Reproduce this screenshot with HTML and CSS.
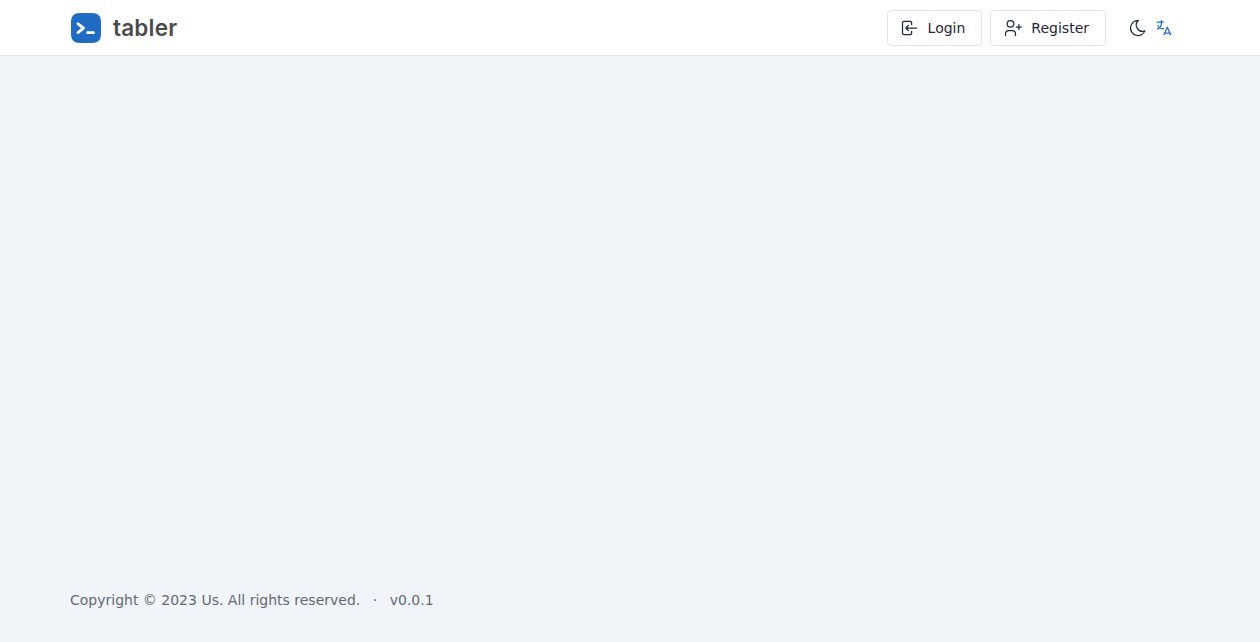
FILE: index.html
```html
<!DOCTYPE html>
<html lang="en">
<head>
<meta charset="utf-8">
<title>Tabler</title>
<link rel="stylesheet" href="styles.css">
</head>
<body>
<div class="page">
  <header class="navbar">
    <div class="container nav-inner">
      <a class="brand" href="#">
        <svg class="brand-mark" viewBox="0 0 30 30" width="30" height="30" aria-hidden="true">
          <path class="brand-bg" d="M9 0H21C27 0 30 3 30 9V21C30 27 27 30 21 30H9C3 30 0 27 0 21V9C0 3 3 0 9 0Z"/>
          <path class="brand-fg" d="M7 10.8L12.5 15.2L7 19.6M16.5 19.7H22.5"/>
        </svg>
        <span class="brand-name">tabler</span>
      </a>
      <div class="nav-actions">
        <a class="btn" href="#">
          <svg class="icon btn-icon" viewBox="0 0 24 24"><path d="M14 8v-2a2 2 0 0 0 -2 -2h-7a2 2 0 0 0 -2 2v12a2 2 0 0 0 2 2h7a2 2 0 0 0 2 -2v-2"/><path d="M20 12h-13l3 -3m0 6l-3 -3"/></svg>
          Login
        </a>
        <a class="btn" href="#">
          <svg class="icon btn-icon" viewBox="0 0 24 24"><path d="M5 7a4 4 0 1 0 8 0a4 4 0 1 0 -8 0"/><path d="M3 21v-2a4 4 0 0 1 4 -4h4a4 4 0 0 1 4 4v2"/><path d="M16 11h6m-3 -3v6"/></svg>
          Register
        </a>
        <a class="icon-link moon" href="#">
          <svg class="icon" viewBox="0 0 24 24"><path d="M12 3c.132 0 .263 0 .393 0a7.5 7.5 0 0 0 7.92 12.446a9 9 0 1 1 -8.313 -12.454z"/></svg>
        </a>
        <a class="icon-link lang" href="#">
          <svg class="icon" viewBox="0 0 24 24"><path d="M4 5h7"/><path d="M9 3v2c0 4.418 -2.239 8 -5 8"/><path d="M5 9c-.003 2.144 2.952 3.908 6.7 4"/><path d="M12 20l4 -9l4 9"/><path d="M19.1 18h-6.2"/></svg>
        </a>
      </div>
    </div>
  </header>
  <main class="content"></main>
  <footer class="footer">
    <div class="container footer-inner">
      <span>Copyright © 2023 Us. All rights reserved.</span>
      <span class="dot">·</span>
      <span>v0.0.1</span>
    </div>
  </footer>
</div>
</body>
</html>
```
FILE: styles.css
```css
* { box-sizing: border-box; }
html, body { margin: 0; height: 100%; }
body {
  background: #f1f5f9;
  font-family: "DejaVu Sans", sans-serif;
  font-size: 14px;
  line-height: 20px;
  color: #1d273b;
}
a { color: inherit; text-decoration: none; }
.page { min-height: 100vh; display: flex; flex-direction: column; }
.container { width: 1120px; margin: 0 auto; }
.navbar { height: 56px; background: #fff; border-bottom: 1px solid #e6e7e9; }
.nav-inner { height: 55px; display: flex; align-items: center; justify-content: space-between; }
.brand { display: flex; align-items: center; gap: 12px; padding-left: 1px; }
.brand-mark { display: block; flex: none; }
.brand-bg { fill: #206bc4; }
.brand-fg { fill: none; stroke: #fff; stroke-width: 2.8; stroke-linecap: round; stroke-linejoin: round; }
.brand-name { font-family: Inter, sans-serif; font-weight: 600; font-size: 22.5px; line-height: 30px; letter-spacing: .2px; color: #4a4a4a; }
.nav-actions { display: flex; align-items: center; margin-right: 16px; }
.btn {
  display: flex; align-items: center; height: 36px; padding: 0 16px 0 12px; margin-right: 8px;
  background: #fff; border: 1px solid #e0e4ea; border-radius: 4px;
}
.icon { display: block; width: 20px; height: 20px; fill: none; stroke: currentColor; stroke-width: 1.5; stroke-linecap: round; stroke-linejoin: round; }
.btn-icon { margin-right: 8px; }
.icon-link { display: block; }
.moon { margin-left: 14px; }
.lang { margin-left: 6px; color: #206bc4; }
.content { flex: 1; }
.footer { height: 84px; padding-top: 32px; color: #626976; }
.footer-inner { display: flex; }
.dot { margin: 0 12.5px; }
```
